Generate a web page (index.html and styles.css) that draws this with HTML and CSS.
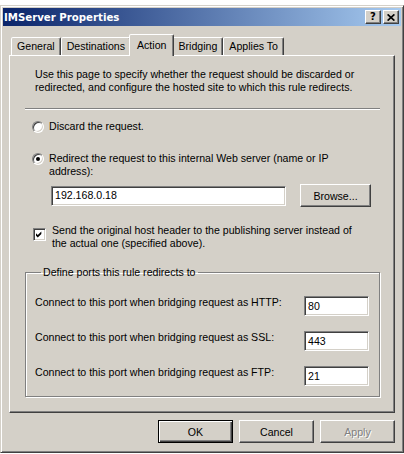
FILE: index.html
```html
<!DOCTYPE html>
<html>
<head>
<meta charset="utf-8">
<title>IMServer Properties</title>
<link rel="stylesheet" href="styles.css">
</head>
<body>
<div class="window">
  <div class="titlebar">
    <span class="title">IMServer Properties</span>
    <div class="caption-btns">
      <span class="cbtn help">?</span>
      <span class="cbtn close"><svg width="8" height="7" viewBox="0 0 8 7"><path d="M0.6 0.4 L7.4 6.6 M7.4 0.4 L0.6 6.6" stroke="#000" stroke-width="1.7" fill="none"/></svg></span>
    </div>
  </div>
  <div class="content">
    <div class="tabs">
      <div class="tab">General</div>
      <div class="tab">Destinations</div>
      <div class="tab selected">Action</div>
      <div class="tab">Bridging</div>
      <div class="tab">Applies To</div>
    </div>
    <div class="panel">
      <p class="intro">Use this page to specify whether the request should be discarded or<br>redirected, and configure the hosted site to which this rule redirects.</p>
      <div class="sep"></div>
      <div class="opt discard"><span class="radio"></span><span class="label">Discard the request.</span></div>
      <div class="opt redirect"><span class="radio checked"></span><span class="label">Redirect the request to this internal Web server (name or IP<br>address):</span></div>
      <div class="hostrow">
        <div class="field host">192.168.0.18</div>
        <div class="btn browse">Browse...</div>
      </div>
      <div class="opt check"><span class="checkbox"><svg width="9" height="9" viewBox="0 0 9 9"><path d="M0 3 L2 5 L6 1 L6 4 L2 8 L0 6 Z" fill="#000"/></svg></span><span class="label">Send the original host header to the publishing server instead of<br>the actual one (specified above).</span></div>
      <fieldset class="group">
        <legend>Define ports this rule redirects to</legend>
        <div class="port"><span class="plabel">Connect to this port when bridging request as HTTP:</span><div class="field small">80</div></div>
        <div class="port"><span class="plabel">Connect to this port when bridging request as SSL:</span><div class="field small">443</div></div>
        <div class="port"><span class="plabel">Connect to this port when bridging request as FTP:</span><div class="field small">21</div></div>
      </fieldset>
    </div>
    <div class="buttons">
      <div class="btn default">OK</div>
      <div class="btn">Cancel</div>
      <div class="btn disabled">Apply</div>
    </div>
  </div>
</div>
</body>
</html>
```

FILE: styles.css
```css
* { box-sizing: border-box; }
html, body { margin: 0; padding: 0; background: #fff; }
body {
  padding-top: 5px;
  font-family: "Liberation Sans", Arial, sans-serif;
  font-size: 10.6px;
  color: #000;
}
.window {
  width: 404px;
  height: 448px;
  background: #d4d0c8;
  border: 1px solid;
  border-color: #d4d0c8 #404040 #404040 #d4d0c8;
  box-shadow: inset 1px 1px #fff, inset -1px -1px #808080;
  padding: 2px;
  display: flex;
  flex-direction: column;
}
.titlebar {
  height: 18px;
  flex: none;
  background: linear-gradient(to right, #0a246a, #a6caf0);
  display: flex;
  align-items: center;
  justify-content: space-between;
  padding: 0 2px 0 1px;
}
.title {
  color: #fff;
  font-family: "DejaVu Sans", sans-serif;
  font-weight: bold;
  font-size: 10.2px;
}
.caption-btns { display: flex; gap: 2px; }
.cbtn {
  width: 16px;
  height: 14px;
  background: #d4d0c8;
  border: 1px solid;
  border-color: #fff #404040 #404040 #fff;
  box-shadow: inset -1px -1px #808080;
  display: flex;
  align-items: center;
  justify-content: center;
}
.cbtn.help {
  font-family: "DejaVu Sans", sans-serif;
  font-weight: bold;
  font-size: 10px;
  line-height: 10px;
}
.content {
  flex: 1;
  padding: 0 6px;
  display: flex;
  flex-direction: column;
}
.tabs {
  display: flex;
  align-items: flex-end;
  height: 21px;
  margin-top: 8px;
  padding-left: 2px;
}
.tab {
  height: 18px;
  padding: 0 5px 1px;
  background: #d4d0c8;
  border: 1px solid;
  border-bottom: none;
  border-color: #fff #404040 transparent #fff;
  box-shadow: inset -1px 0 #808080;
  border-radius: 2px 2px 0 0;
  display: flex;
  align-items: center;
  white-space: nowrap;
}
.tab.selected {
  height: 22px;
  margin: 0 -2px -1px;
  padding: 0 7px 2px;
  position: relative;
  z-index: 1;
}
.panel {
  height: 358px;
  flex: none;
  border: 1px solid;
  border-color: #fff #404040 #404040 #fff;
  box-shadow: inset -1px -1px #808080;
  padding: 0 14px 0 15px;
  display: flex;
  flex-direction: column;
}
.intro {
  margin: 12px 0 0 10px;
  line-height: 13px;
  white-space: nowrap;
}
.sep {
  margin-top: 14px;
  height: 2px;
  border-top: 1px solid #808080;
  border-bottom: 1px solid #fff;
}
.opt {
  display: flex;
  line-height: 13px;
  white-space: nowrap;
}
.opt.discard { margin-top: 10px; align-items: center; }
.opt.redirect { margin-top: 19px; align-items: flex-start; }
.radio {
  width: 12px;
  height: 12px;
  flex: none;
  margin: 0 5px 0 7px;
  border-radius: 50%;
  background: #fff;
  border: 1px solid;
  border-color: #808080 #fff #fff #808080;
  box-shadow: inset 1px 1px #404040, inset -1px -1px #d4d0c8;
  display: flex;
  align-items: center;
  justify-content: center;
}
.redirect .radio { margin-top: 1px; }
.radio.checked::after {
  content: "";
  width: 4px;
  height: 4px;
  border-radius: 50%;
  background: #000;
}
.hostrow {
  margin: 6px 0 0 26px;
  height: 23px;
  display: flex;
  align-items: center;
  gap: 14px;
}
.field {
  height: 20px;
  background: #fff;
  border: 1px solid;
  border-color: #808080 #fff #fff #808080;
  box-shadow: inset 1px 1px #404040, inset -1px -1px #d4d0c8;
  padding: 0 3px;
  display: flex;
  align-items: center;
  line-height: 13px;
}
.field.host { width: 235px; }
.field.small { width: 65px; flex: none; }
.btn {
  width: 75px;
  height: 23px;
  background: #d4d0c8;
  border: 1px solid;
  border-color: #fff #404040 #404040 #fff;
  box-shadow: inset -1px -1px #808080;
  display: flex;
  align-items: center;
  justify-content: center;
  flex: none;
}
.btn.browse { width: 71px; }
.btn.default {
  border-color: #000;
  box-shadow: inset 1px 1px #fff, inset -1px -1px #404040, inset -2px -2px #808080;
}
.btn.disabled {
  color: #808080;
  text-shadow: 1px 1px #fff;
}
.opt.check { margin-top: 17px; align-items: flex-start; }
.checkbox {
  width: 13px;
  height: 13px;
  flex: none;
  margin: 4px 6px 0 8px;
  background: #fff;
  border: 1px solid;
  border-color: #808080 #fff #fff #808080;
  box-shadow: inset 1px 1px #404040, inset -1px -1px #d4d0c8;
  padding: 1px;
  display: flex;
}
.checkbox svg { display: block; margin: 0 0 0 1px; }
.group {
  margin: 16px 0 0;
  min-width: 0;
  padding: 17px 10px 10px 9px;
  border: 1px solid #808080;
  box-shadow: inset 1px 1px #fff, 1px 1px #fff;
}
.group legend {
  padding: 0 2px;
  margin-left: 6px;
  line-height: 13px;
}
.port {
  display: flex;
  justify-content: space-between;
  align-items: flex-start;
  height: 20px;
}
.port + .port { margin-top: 15px; }
.plabel { line-height: 13px; white-space: nowrap; }
.buttons {
  margin-top: 7px;
  display: flex;
  justify-content: flex-end;
  gap: 6px;
}
```
